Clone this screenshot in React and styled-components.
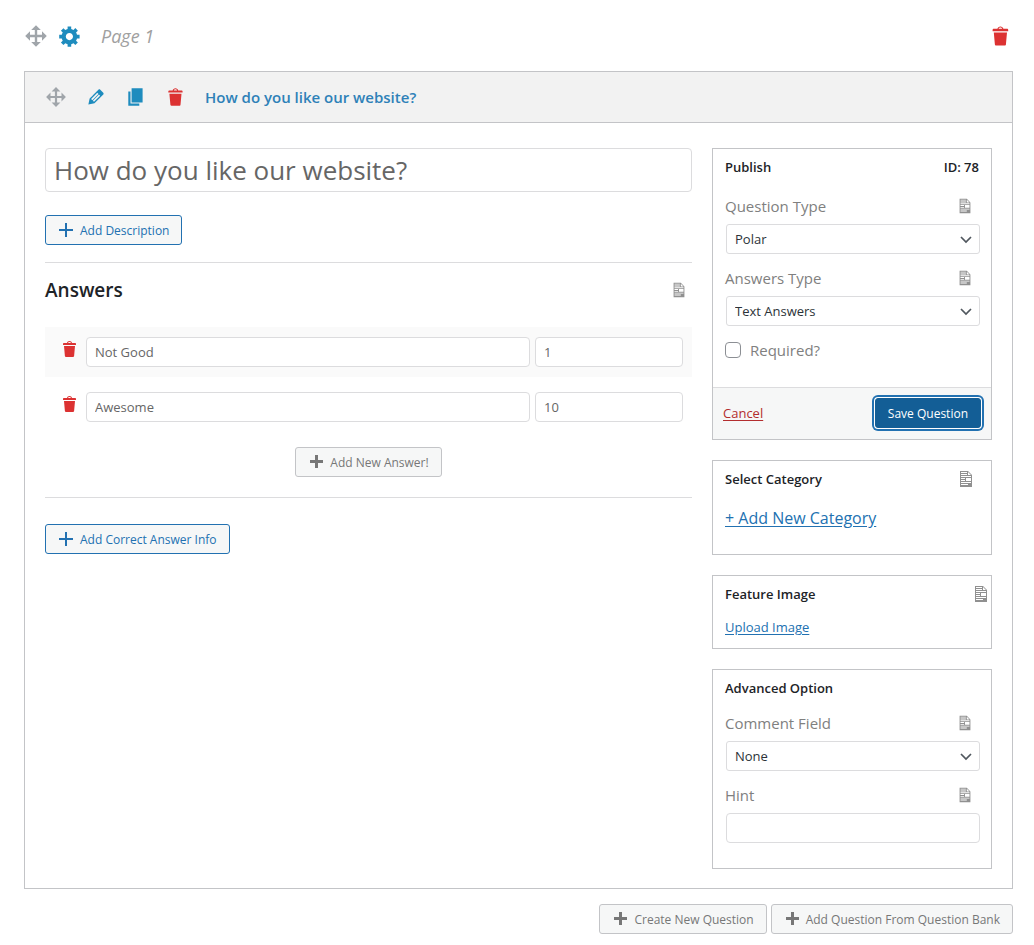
import React, { useState } from 'react'
import styled, { createGlobalStyle, css } from 'styled-components'

const GlobalStyle = createGlobalStyle`
  *, *::before, *::after {
    box-sizing: border-box;
  }
  body {
    margin: 0;
    background: #fff;
    color: #777;
    font-family: 'Segoe UI', 'Open Sans', 'Noto Sans', sans-serif;
    font-size: 13px;
    line-height: 20px;
  }
  input, select, button {
    font-family: inherit;
  }
`

const paths = {
  move: 'M19 10l-4 4v-3h-4v4h3l-4 4-4-4h3v-4H5v3l-4-4 4-4v3h4V5H6l4-4 4 4h-3v4h4V6l4 4z',
  gear: 'M18 12h-2.18c-.17.7-.44 1.35-.81 1.93l1.54 1.54-2.1 2.1-1.54-1.54c-.58.36-1.23.63-1.91.79V19H8v-2.18c-.68-.16-1.33-.43-1.91-.79l-1.54 1.54-2.12-2.12 1.54-1.54c-.36-.58-.63-1.23-.79-1.91H1V9.03h2.17c.16-.7.44-1.35.8-1.94L2.43 5.55l2.1-2.1 1.54 1.54c.58-.37 1.24-.64 1.93-.81V2h3v2.18c.68.16 1.33.43 1.91.79l1.54-1.54 2.12 2.12-1.54 1.54c.36.59.64 1.24.8 1.94H18V12zm-8.5 1.5c1.66 0 3-1.34 3-3s-1.34-3-3-3-3 1.34-3 3 1.34 3 3 3z',
  edit: 'M13.89 3.39l2.71 2.72c.46.46.42 1.24.03 1.64l-8.01 8.02-5.56 1.16 1.16-5.58s7.6-7.63 7.99-8.03c.39-.39 1.22-.39 1.68.07zm-2.73 2.79l-5.59 5.61 1.11 1.11 5.54-5.65zm-2.97 8.23l5.58-5.6-1.07-1.08-5.59 5.6z',
  copy: 'M6 15V2h10v13H6zm-1 1h8v2H3V5h2v11z',
  trash: 'M12 4h3c.6 0 1 .4 1 1v1H3V5c0-.6.5-1 1-1h3c.2-1.1 1.3-2 2.5-2s2.3.9 2.5 2zM8 4h3c-.2-.6-.9-1-1.5-1S8.2 3.4 8 4zM4 7h11l-.9 10.1c0 .5-.5.9-1 .9H5.9c-.5 0-.9-.4-1-.9L4 7z',
  doc: 'M12 2l4 4v12H4V2h8zM5 3v1h6V3H5zm7 3h3l-3-3v3zM5 5v1h6V5H5zm10 3V7H5v1h10zM5 9v1h4V9H5zm10 3V9h-5v3h5zM5 11v1h4v-1H5zm10 3v-1H5v1h10zm-3 2v-1H5v1h7z',
  plus: 'M17 9v2h-6v6H9v-6H3V9h6V3h2v6h6z',
  plusBold: 'M17 8v3h-5v5H9v-5H4V8h5V3h3v5h5z',
}

const Svg = styled.svg`
  display: block;
  flex: none;
  fill: currentColor;
`

const Icon = ({ name, size }) => (
  <Svg width={size} height={size} viewBox="0 0 20 20" fillRule="evenodd" aria-hidden="true">
    <path d={paths[name]} />
  </Svg>
)

const Page = styled.main`
  padding: 24px 21px 10px 24px;
`

const PageHeader = styled.header`
  display: flex;
  align-items: center;
  gap: 10px;
  height: 24px;
  margin-bottom: 23px;
`

const PageName = styled.h1`
  flex: 1;
  margin: 0 0 0 9px;
  color: #a0a0a0;
  font-size: 18px;
  font-style: italic;
  font-weight: 400;
`

const colors = {
  grey: '#a0a5aa',
  blue: '#1e8cbe',
  red: '#dc3232',
}

const IconButton = styled.button`
  display: block;
  padding: 0;
  border: 0;
  background: none;
  color: ${({ $tone }) => colors[$tone]};
  cursor: pointer;
`

const Question = styled.section`
  border: 1px solid #c3c4c7;
`

const Toolbar = styled.div`
  display: flex;
  align-items: center;
  gap: 18px;
  height: 51px;
  padding: 0 20px;
  border-bottom: 1px solid #c3c4c7;
  background: #f2f2f2;
`

const ToolbarTitle = styled.h2`
  margin: 0;
  color: #2e81b8;
  font-size: 15px;
  font-weight: 600;
`

const Body = styled.div`
  display: flex;
  align-items: flex-start;
  gap: 20px;
  padding: 25px 20px 19px;
`

const Editor = styled.div`
  flex: 1;
  min-width: 0;
`

const Sidebar = styled.aside`
  display: flex;
  flex: none;
  flex-direction: column;
  gap: 20px;
  width: 280px;
`

const Input = styled.input`
  display: block;
  width: 100%;
  min-width: 0;
  height: 30px;
  padding: 0 8px;
  border: 1px solid #dcdcde;
  border-radius: 4px;
  background: #fff;
  color: #666;
  font-size: 13px;
`

const TitleInput = styled(Input)`
  height: 44px;
  font-size: 26px;
`

const Button = styled.button`
  display: inline-flex;
  align-items: center;
  gap: 4px;
  height: 30px;
  padding: 0 12px 0 10px;
  border: 1px solid #c3c4c7;
  border-radius: 3px;
  background: #f6f7f7;
  color: #777;
  font-size: 12px;
  white-space: nowrap;
  cursor: pointer;
  ${({ $outline }) => $outline && css`
    border-color: #2271b1;
    color: #2271b1;
  `}
`

const Divider = styled.hr`
  height: 1px;
  margin: ${({ $top }) => $top}px 0 0;
  border: 0;
  background: #dcdcde;
`

const AnswersHead = styled.div`
  display: flex;
  align-items: center;
  justify-content: space-between;
  padding: 16px 4px 26px 0;
`

const AnswersTitle = styled.h3`
  margin: 0;
  color: #1d2327;
  font-size: 19px;
  font-weight: 600;
  line-height: 22px;
`

const DocLink = styled.a`
  display: block;
  color: #909090;
`

const AnswerList = styled.ul`
  display: grid;
  gap: 5px;
  margin: 0;
  padding: 0;
  list-style: none;
`

const Answer = styled.li`
  display: grid;
  grid-template-columns: auto 3fr 1fr;
  align-items: center;
  gap: 5px;
  padding: 10px 9px 10px 15px;
  &:nth-child(odd) {
    background: #fafafa;
  }
  & > button {
    align-self: start;
    padding: 2px 1px 0 0;
  }
`

const AddRow = styled.div`
  display: flex;
  justify-content: ${({ $align }) => $align};
  gap: 4px;
  padding-top: ${({ $top }) => $top}px;
`

const Card = styled.section`
  border: 1px solid #c3c4c7;
  padding: 8px 12px ${({ $bottom }) => $bottom}px;
`

const CardTitle = styled.h3`
  display: flex;
  align-items: center;
  justify-content: space-between;
  height: 20px;
  margin: 0;
  color: #1d2327;
  font-size: 13px;
  font-weight: 600;
`

const DocSlot = styled.span`
  margin-right: ${({ $inset }) => $inset}px;
`

const Field = styled.div`
  margin: ${({ $top }) => $top}px -1px 0 1px;
`

const FieldHead = styled.div`
  display: flex;
  align-items: center;
  justify-content: space-between;
  height: 20px;
  margin: 0 6px 8px -1px;
  color: #808080;
`

const Label = styled.label`
  font-size: 15px;
`

const SelectWrap = styled.div`
  position: relative;
  color: #50575e;
  svg {
    position: absolute;
    top: 8px;
    right: 7px;
    pointer-events: none;
  }
`

const Select = styled.select`
  appearance: none;
  display: block;
  width: 100%;
  height: 30px;
  padding: 0 24px 0 8px;
  border: 1px solid #dcdcde;
  border-radius: 3px;
  background: #fff;
  color: #2c3338;
  font-size: 13px;
`

const CheckRow = styled.div`
  display: flex;
  align-items: center;
  gap: 9px;
  margin-top: 14px;
  color: #808080;
`

const Checkbox = styled.input`
  appearance: none;
  width: 16px;
  height: 16px;
  margin: 0;
  border: 1px solid #8c8f94;
  border-radius: 4px;
  background: #fff;
  &:checked {
    background: #2271b1;
  }
`

const CardFooter = styled.div`
  display: flex;
  align-items: center;
  justify-content: space-between;
  height: 52px;
  margin: 27px -12px 0;
  padding: 0 10px 1px;
  border-top: 1px solid #dcdcde;
  background: #f6f7f7;
`

const Link = styled.a`
  color: ${({ $danger }) => ($danger ? '#b32d2e' : '#2271b1')};
  font-size: ${({ $large }) => ($large ? 16 : 13)}px;
  text-underline-offset: 2px;
`

const SaveButton = styled(Button)`
  padding: 0 12px;
  border-color: #135e96;
  background: #135e96;
  color: #fff;
  box-shadow: 0 0 0 1px #fff, 0 0 0 3px #2271b1;
`

const LinkRow = styled.div`
  margin-top: ${({ $top }) => $top}px;
`

const Doc = ({ size = 18, label }) => (
  <DocLink href="#docs" aria-label={`${label} documentation`}>
    <Icon name="doc" size={size} />
  </DocLink>
)

const SelectField = ({ id, label, options, top }) => (
  <Field $top={top}>
    <FieldHead>
      <Label htmlFor={id}>{label}</Label>
      <Doc label={label} />
    </FieldHead>
    <SelectWrap>
      <Select id={id}>
        {options.map((option) => (
          <option key={option}>{option}</option>
        ))}
      </Select>
      <svg width="14" height="14" viewBox="0 0 14 14" fill="none" stroke="currentColor" strokeWidth="1.7">
        <path d="M2 5l5 5 5-5" />
      </svg>
    </SelectWrap>
  </Field>
)

const App = () => {
  const [title, setTitle] = useState('How do you like our website?')
  const [answers, setAnswers] = useState([
    { id: 1, text: 'Not Good', points: '1' },
    { id: 2, text: 'Awesome', points: '10' },
  ])

  const addAnswer = () => {
    setAnswers((prev) => [...prev, { id: Date.now(), text: '', points: '' }])
  }

  const deleteAnswer = (id) => {
    setAnswers((prev) => prev.filter((answer) => answer.id !== id))
  }

  return (
    <>
      <GlobalStyle />
      <Page>
        <PageHeader>
          <IconButton $tone="grey" aria-label="Move page"><Icon name="move" size={24} /></IconButton>
          <IconButton $tone="blue" aria-label="Page settings"><Icon name="gear" size={24} /></IconButton>
          <PageName>Page 1</PageName>
          <IconButton $tone="red" aria-label="Delete page"><Icon name="trash" size={24} /></IconButton>
        </PageHeader>

        <Question>
          <Toolbar>
            <IconButton $tone="grey" aria-label="Move question"><Icon name="move" size={22} /></IconButton>
            <IconButton $tone="blue" aria-label="Edit question"><Icon name="edit" size={22} /></IconButton>
            <IconButton $tone="blue" aria-label="Duplicate question"><Icon name="copy" size={22} /></IconButton>
            <IconButton $tone="red" aria-label="Delete question"><Icon name="trash" size={22} /></IconButton>
            <ToolbarTitle>{title}</ToolbarTitle>
          </Toolbar>

          <Body>
            <Editor>
              <TitleInput aria-label="Question title" value={title} onChange={(e) => setTitle(e.target.value)} />
              <AddRow $top={23}>
                <Button $outline><Icon name="plus" size={20} />Add Description</Button>
              </AddRow>
              <Divider $top={17} />
              <AnswersHead>
                <AnswersTitle>Answers</AnswersTitle>
                <Doc label="Answers" />
              </AnswersHead>
              <AnswerList>
                {answers.map((answer) => (
                  <Answer key={answer.id}>
                    <IconButton $tone="red" aria-label="Delete answer" onClick={() => deleteAnswer(answer.id)}>
                      <Icon name="trash" size={20} />
                    </IconButton>
                    <Input aria-label="Answer" defaultValue={answer.text} />
                    <Input aria-label="Points" defaultValue={answer.points} />
                  </Answer>
                ))}
              </AnswerList>
              <AddRow $top={15} $align="center">
                <Button onClick={addAnswer}><Icon name="plusBold" size={20} />Add New Answer!</Button>
              </AddRow>
              <Divider $top={20} />
              <AddRow $top={26}>
                <Button $outline><Icon name="plus" size={20} />Add Correct Answer Info</Button>
              </AddRow>
            </Editor>

            <Sidebar>
              <Card $bottom={0}>
                <CardTitle>Publish<span>ID: 78</span></CardTitle>
                <SelectField id="question-type" label="Question Type" options={['Polar']} top={19} />
                <SelectField id="answers-type" label="Answers Type" options={['Text Answers']} top={14} />
                <CheckRow>
                  <Checkbox type="checkbox" id="required" />
                  <Label htmlFor="required">Required?</Label>
                </CheckRow>
                <CardFooter>
                  <Link $danger href="#cancel">Cancel</Link>
                  <SaveButton>Save Question</SaveButton>
                </CardFooter>
              </Card>

              <Card $bottom={25}>
                <CardTitle>
                  Select Category
                  <DocSlot $inset={3}><Doc size={20} label="Category" /></DocSlot>
                </CardTitle>
                <LinkRow $top={19}><Link $large href="#category">+ Add New Category</Link></LinkRow>
              </Card>

              <Card $bottom={11}>
                <CardTitle>
                  Feature Image
                  <DocSlot $inset={-12}><Doc size={20} label="Feature image" /></DocSlot>
                </CardTitle>
                <LinkRow $top={13}><Link href="#upload">Upload Image</Link></LinkRow>
              </Card>

              <Card $bottom={25}>
                <CardTitle>Advanced Option</CardTitle>
                <SelectField id="comment-field" label="Comment Field" options={['None']} top={15} />
                <Field $top={14}>
                  <FieldHead>
                    <Label htmlFor="hint">Hint</Label>
                    <Doc label="Hint" />
                  </FieldHead>
                  <Input id="hint" />
                </Field>
              </Card>
            </Sidebar>
          </Body>
        </Question>

        <AddRow $top={15} $align="flex-end">
          <Button><Icon name="plusBold" size={20} />Create New Question</Button>
          <Button><Icon name="plusBold" size={20} />Add Question From Question Bank</Button>
        </AddRow>
      </Page>
    </>
  )
}

export default App
